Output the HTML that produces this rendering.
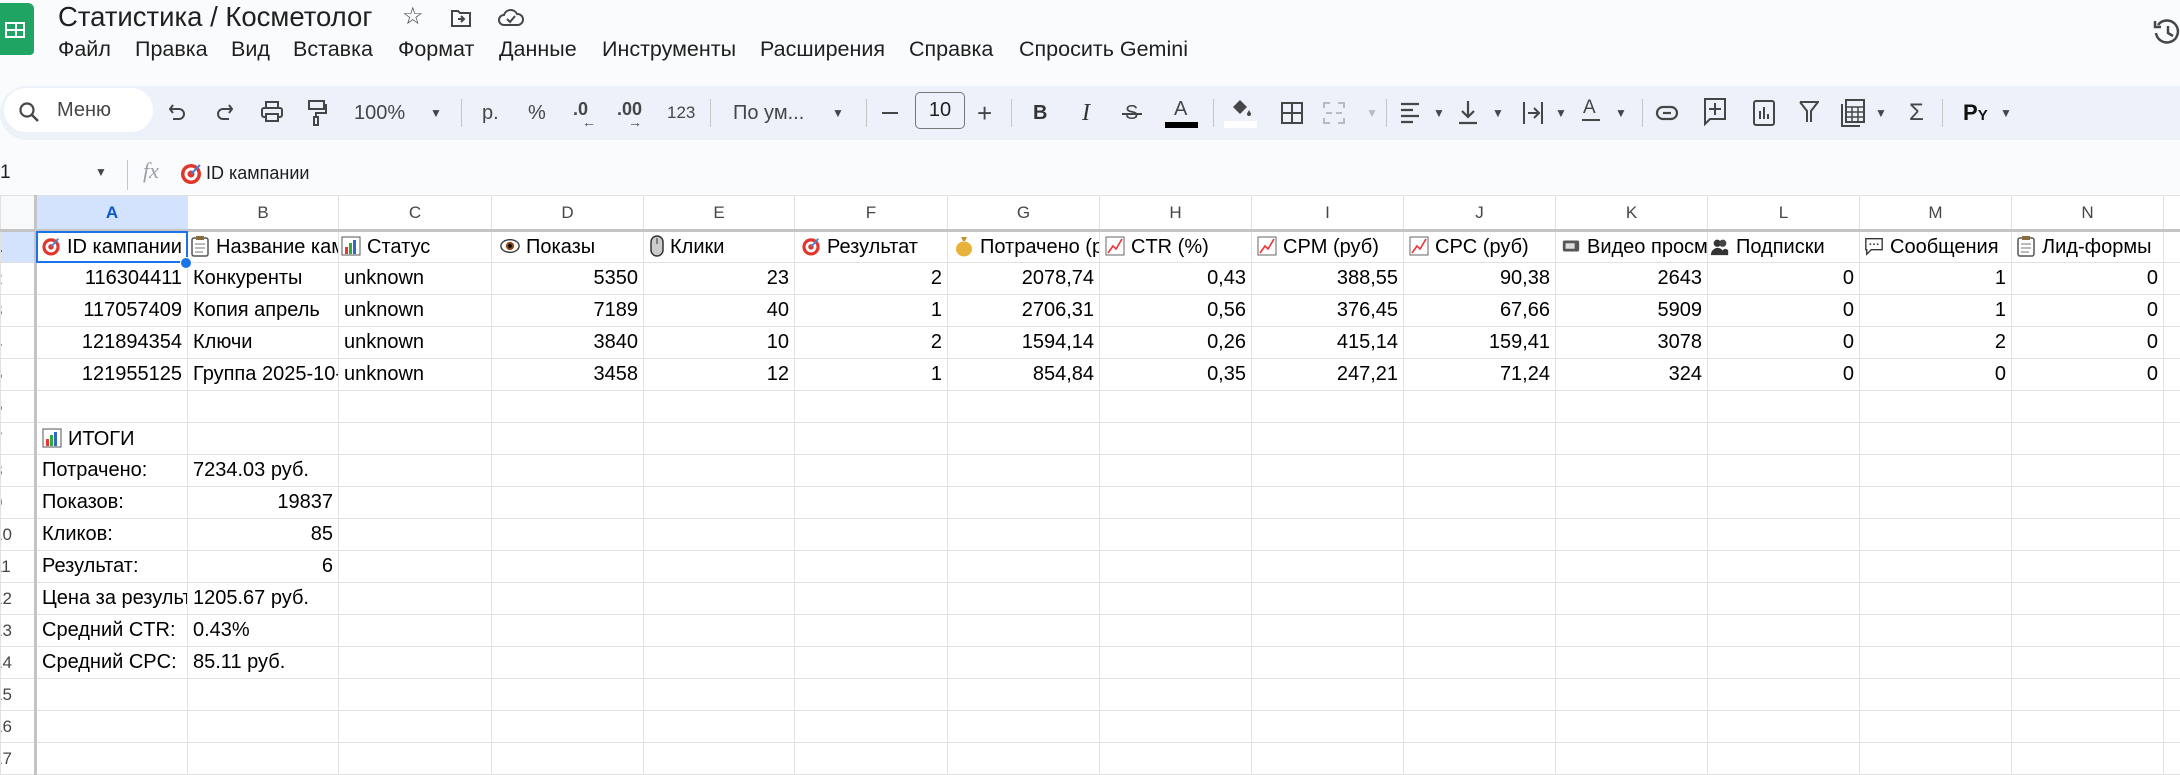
<!DOCTYPE html>
<html><head><meta charset="utf-8">
<style>
*{box-sizing:border-box;margin:0;padding:0}
body{width:2180px;height:753px;overflow:hidden;background:#f9fbfd;font-family:"Liberation Sans",Arial,sans-serif;color:#1f1f1f;position:relative}
.abs{position:absolute}
.menu span{position:absolute;top:37px;font-size:21.5px;color:#1f1f1f}
.tb{position:absolute;left:0;top:86px;width:2180px;height:54px;background:#edf2fa;border-radius:27px 0 0 27px}
.ti{position:absolute;top:0;height:54px;line-height:54px;font-size:20px;color:#444746}
.sep{position:absolute;top:13px;width:1px;height:28px;background:#c4c7c5}
.dd{position:absolute;top:0;line-height:54px;font-size:12px;color:#444746}
table{position:absolute;left:0;top:195px;width:2193px;border-collapse:collapse;table-layout:fixed;background:#fff}
td{border:1px solid #e1e1e1;height:32px;font-size:20px;white-space:nowrap;overflow:hidden;padding:0 5px;color:#000}
tr.h td{height:35px;text-align:center;font-size:17px;color:#444746;border-bottom:3px solid #c4c4c4}
td.rh{color:#444746;font-size:17px;padding:0;text-indent:-8px;text-align:left;border-right:3px solid #c4c4c4}
td.r{text-align:right}
.ic{display:inline-block;width:20px;height:22px;vertical-align:-4px;margin-right:6px}
</style></head><body>
<div class="abs" style="left:0;top:3px;width:34px;height:52px;background:#1fa463;border-radius:0 6px 4px 0"></div>
<div class="abs" style="left:5px;top:22px;width:20px;height:16px;border:2px solid #fff;background:linear-gradient(#fff,#fff) 8px 0/2px 100% no-repeat,linear-gradient(#fff,#fff) 0 5px/100% 2px no-repeat"></div>
<div class="abs" style="left:58px;top:1px;font-size:27.5px;color:#1f1f1f">Статистика / Косметолог</div>
<div class="abs" style="left:402px;top:2px;font-size:24px;color:#444746">☆</div>
<svg class="abs" style="left:450px;top:8px" width="22" height="20" viewBox="0 0 22 20"><path d="M2 3h6l2 2h10v13H2z" fill="none" stroke="#444746" stroke-width="2"/><path d="M8 11h6M11 8l3 3-3 3" fill="none" stroke="#444746" stroke-width="2"/></svg>
<svg class="abs" style="left:497px;top:6px" width="28" height="22" viewBox="0 0 28 22"><path d="M7 19a5 5 0 0 1 0-10a7 7 0 0 1 13-1a5.5 5.5 0 0 1 1 11z" fill="none" stroke="#444746" stroke-width="2"/><path d="M10 13l3 3 5-6" fill="none" stroke="#444746" stroke-width="2"/></svg>
<svg class="abs" style="left:2152px;top:17px" width="28" height="30" viewBox="0 0 28 30"><path d="M6 8a11 11 0 1 1-2 8" fill="none" stroke="#444746" stroke-width="2.5"/><path d="M3 4v6h6" fill="none" stroke="#444746" stroke-width="2.5"/><path d="M16 9v7l5 3" fill="none" stroke="#444746" stroke-width="2.5"/></svg>
<div class="menu">
<span style="left:58px">Файл</span><span style="left:135px">Правка</span><span style="left:231px">Вид</span><span style="left:293px">Вставка</span><span style="left:398px">Формат</span><span style="left:499px">Данные</span><span style="left:602px">Инструменты</span><span style="left:760px">Расширения</span><span style="left:909px">Справка</span><span style="left:1019px">Спросить Gemini</span>
</div>
<div class="tb">
<div class="abs" style="left:4px;top:2px;width:149px;height:44px;background:#fff;border-radius:22px"></div>
<svg class="abs" style="left:18px;top:15px" width="22" height="22" viewBox="0 0 22 22"><circle cx="9" cy="9" r="6.5" fill="none" stroke="#444746" stroke-width="2.2"/><path d="M14 14l6 6" stroke="#444746" stroke-width="2.4"/></svg>
<div class="ti" style="left:57px;top:-3px">Меню</div>
<svg class="abs" style="left:168px;top:16px" width="20" height="22" viewBox="0 0 20 22"><path d="M5 3L2 7l3 4M2 7h9a5 5 0 0 1 0 10H5" fill="none" stroke="#444746" stroke-width="2"/></svg>
<svg class="abs" style="left:214px;top:16px" width="20" height="22" viewBox="0 0 20 22"><path d="M15 3l3 4-3 4M18 7H9a5 5 0 0 0 0 10h6" fill="none" stroke="#444746" stroke-width="2"/></svg>
<svg class="abs" style="left:260px;top:15px" width="24" height="22" viewBox="0 0 24 22"><rect x="6" y="1" width="12" height="6" fill="none" stroke="#444746" stroke-width="2"/><rect x="2" y="7" width="20" height="9" rx="2" fill="none" stroke="#444746" stroke-width="2"/><rect x="6" y="13" width="12" height="7" fill="#edf2fa" stroke="#444746" stroke-width="2"/></svg>
<svg class="abs" style="left:307px;top:13px" width="20" height="28" viewBox="0 0 20 28"><rect x="2" y="2" width="15" height="8" fill="none" stroke="#444746" stroke-width="2"/><path d="M17 6h2v8H9v4" fill="none" stroke="#444746" stroke-width="2"/><rect x="7" y="18" width="4" height="8" fill="none" stroke="#444746" stroke-width="2"/></svg>
<div class="ti" style="left:354px">100%</div><div class="dd" style="left:430px">▼</div>
<div class="sep" style="left:461px"></div>
<div class="ti" style="left:482px">р.</div>
<div class="ti" style="left:528px">%</div>
<div class="ti" style="left:573px;font-size:18px;font-weight:bold;top:-4px">.0</div><div class="ti" style="left:582px;top:9px;font-size:14px">←</div>
<div class="ti" style="left:617px;font-size:18px;font-weight:bold;top:-4px">.00</div><div class="ti" style="left:628px;top:9px;font-size:14px">→</div>
<div class="ti" style="left:667px;font-size:17px">123</div>
<div class="sep" style="left:710px"></div>
<div class="ti" style="left:733px">По ум...</div><div class="dd" style="left:832px">▼</div>
<div class="sep" style="left:866px"></div>
<div class="abs" style="left:882px;top:26px;width:16px;height:2px;background:#444746"></div>
<div class="abs" style="left:915px;top:6px;width:50px;height:37px;border:1px solid #747775;border-radius:5px;text-align:center;line-height:35px;font-size:20px;color:#1f1f1f">10</div>
<div class="ti" style="left:977px;font-size:26px">+</div>
<div class="sep" style="left:1011px"></div>
<div class="ti" style="left:1033px;font-weight:bold;color:#333">B</div>
<div class="ti" style="left:1082px;font-style:italic;font-family:'Liberation Serif',serif;font-size:24px;color:#333">I</div>
<div class="ti" style="left:1125px;font-size:20px;color:#444">S</div><div class="abs" style="left:1122px;top:27px;width:20px;height:2px;background:#444"></div>
<div class="ti" style="left:1174px;top:-4px;font-size:20px">A</div><div class="abs" style="left:1165px;top:36px;width:33px;height:6px;background:#000"></div>
<div class="sep" style="left:1213px"></div>
<svg class="abs" style="left:1229px;top:10px" width="24" height="24" viewBox="0 0 24 24"><path d="M4 11l7-7 7 7-7 7z" fill="#444746"/><path d="M20 14c1 2 2 3 2 4a2 2 0 0 1-4 0c0-1 1-2 2-4z" fill="#444746"/></svg><div class="abs" style="left:1224px;top:35px;width:33px;height:7px;background:#fff"></div>
<svg class="abs" style="left:1281px;top:16px" width="22" height="22" viewBox="0 0 22 22"><rect x="1" y="1" width="20" height="20" fill="none" stroke="#444746" stroke-width="2"/><path d="M11 1v20M1 11h20" stroke="#444746" stroke-width="2"/></svg>
<svg class="abs" style="left:1323px;top:16px" width="22" height="22" viewBox="0 0 22 22"><path d="M1 6V1h6M15 1h6v5M21 16v5h-6M7 21H1v-5M3 11h6M13 11h6" fill="none" stroke="#b9bcbf" stroke-width="2"/></svg><div class="dd" style="left:1366px;color:#b9bcbf">▼</div>
<div class="sep" style="left:1386px"></div>
<svg class="abs" style="left:1400px;top:16px" width="20" height="22" viewBox="0 0 20 22"><path d="M1 2h18M1 8h12M1 14h18M1 20h12" stroke="#444746" stroke-width="2.2"/></svg><div class="dd" style="left:1433px">▼</div>
<svg class="abs" style="left:1458px;top:14px" width="20" height="26" viewBox="0 0 20 26"><path d="M10 1v16M4 11l6 6 6-6M1 23h18" fill="none" stroke="#444746" stroke-width="2.2"/></svg><div class="dd" style="left:1492px">▼</div>
<svg class="abs" style="left:1522px;top:14px" width="22" height="26" viewBox="0 0 22 26"><path d="M2 2v22M20 2v22M6 13h10M12 8l5 5-5 5" fill="none" stroke="#444746" stroke-width="2"/></svg><div class="dd" style="left:1555px">▼</div>
<div class="ti" style="left:1583px;top:-5px;font-size:19px">A</div><div class="abs" style="left:1582px;top:33px;width:18px;height:2px;background:#444746"></div><div class="dd" style="left:1615px">▼</div>
<div class="sep" style="left:1642px"></div>
<svg class="abs" style="left:1655px;top:18px" width="24" height="18" viewBox="0 0 24 18"><rect x="2" y="3" width="20" height="12" rx="6" fill="none" stroke="#444746" stroke-width="2.2"/><path d="M8 9h8" stroke="#444746" stroke-width="2.2"/></svg>
<svg class="abs" style="left:1703px;top:11px" width="24" height="30" viewBox="0 0 24 30"><path d="M2 2h20v20H7l-5 5z" fill="none" stroke="#444746" stroke-width="2"/><path d="M12 6v12M6 12h12" stroke="#444746" stroke-width="2"/></svg>
<svg class="abs" style="left:1753px;top:14px" width="22" height="26" viewBox="0 0 22 26"><rect x="1" y="1" width="20" height="24" rx="2" fill="none" stroke="#444746" stroke-width="2"/><path d="M7 19V11M11 19V7M15 19v-5" stroke="#444746" stroke-width="2"/></svg>
<svg class="abs" style="left:1799px;top:14px" width="20" height="24" viewBox="0 0 20 24"><path d="M1 2h18l-7 9v11M8 22V11L1 2" fill="none" stroke="#444746" stroke-width="2"/></svg>
<svg class="abs" style="left:1840px;top:12px" width="26" height="30" viewBox="0 0 26 30"><path d="M2 6v22h18" fill="none" stroke="#444746" stroke-width="2"/><rect x="6" y="2" width="18" height="22" fill="none" stroke="#444746" stroke-width="2"/><path d="M6 9h18M12 9v15M18 9v15M6 14h18M6 19h18" stroke="#444746" stroke-width="1.5"/></svg><div class="dd" style="left:1875px">▼</div>
<div class="ti" style="left:1909px;font-size:24px">Σ</div>
<div class="sep" style="left:1942px"></div>
<div class="ti" style="left:1963px;font-weight:bold;color:#111;font-size:22px">P<span style="font-size:15px">Y</span></div><div class="dd" style="left:2000px">▼</div>
</div>
<div class="abs" style="left:0;top:162px;font-size:19px;color:#1f1f1f">1</div>
<div class="abs" style="left:95px;top:165px;font-size:12px;color:#444746">▼</div>
<div class="abs" style="left:127px;top:160px;width:1px;height:30px;background:#c4c7c5"></div>
<div class="abs" style="left:143px;top:158px;font-size:22px;font-style:italic;font-family:'Liberation Serif',serif;color:#9aa0a6">fx</div>
<svg class="abs" style="left:180px;top:163px" width="22" height="22" viewBox="0 0 22 22"><circle cx="11" cy="11" r="10" fill="#e0362c"/><circle cx="11" cy="11" r="6.5" fill="#fff"/><circle cx="11" cy="11" r="3.5" fill="#e0362c"/><path d="M11 11l9-9" stroke="#4a7fd8" stroke-width="2"/></svg>
<div class="abs" style="left:206px;top:163px;font-size:18px;color:#1f1f1f">ID кампании</div>
<table>
<colgroup><col style="width:35px"><col style="width:152px"><col style="width:151px"><col style="width:153px"><col style="width:152px"><col style="width:151px"><col style="width:153px"><col style="width:152px"><col style="width:152px"><col style="width:152px"><col style="width:152px"><col style="width:152px"><col style="width:152px"><col style="width:152px"><col style="width:152px"><col style="width:31px"></colgroup>
<tr class="h"><td style="background:#f8f9fa;border-right:3px solid #c4c4c4"></td><td style="background:#d3e3fd;color:#0b57d0;font-weight:bold">A</td><td>B</td><td>C</td><td>D</td><td>E</td><td>F</td><td>G</td><td>H</td><td>I</td><td>J</td><td>K</td><td>L</td><td>M</td><td>N</td><td></td></tr>
<tr><td class="rh" style="background:#d3e3fd;color:#0b57d0;font-weight:bold">1</td>
<td style="outline:2px solid #1a73e8;outline-offset:-2px;padding-left:4px"><svg class="ic" viewBox="0 0 22 22"><circle cx="11" cy="12" r="9.5" fill="#e0362c"/><circle cx="11" cy="12" r="6" fill="#fff"/><circle cx="11" cy="12" r="3" fill="#e0362c"/><path d="M11 12l8-9" stroke="#4a7fd8" stroke-width="2"/></svg>ID кампании</td>
<td style="padding-left:2px"><svg class="ic" viewBox="0 0 20 22"><rect x="2" y="3" width="16" height="18" rx="2" fill="#fff" stroke="#555" stroke-width="1.5"/><rect x="6" y="1" width="8" height="4" fill="#8a6d3b"/><path d="M5 9h10M5 13h10M5 17h8" stroke="#777"/></svg>Название кампании</td>
<td style="padding-left:2px"><svg class="ic" viewBox="0 0 20 22"><rect x="1" y="2" width="18" height="18" fill="#fff" stroke="#555"/><rect x="4" y="12" width="3" height="7" fill="#e33"/><rect x="8" y="8" width="3" height="11" fill="#3a3"/><rect x="12" y="5" width="3" height="14" fill="#36c"/></svg>Статус</td>
<td style="padding-left:8px"><svg class="ic" viewBox="0 0 22 22"><ellipse cx="11" cy="11" rx="10" ry="7" fill="#fff" stroke="#333" stroke-width="1.5"/><circle cx="11" cy="11" r="4.5" fill="#8b4513"/><circle cx="11" cy="11" r="2" fill="#000"/></svg>Показы</td>
<td style="padding-left:6px"><svg class="ic" style="width:14px" viewBox="0 0 14 22"><rect x="1" y="1" width="12" height="20" rx="6" fill="#ccc" stroke="#333" stroke-width="1.5"/><path d="M7 3v6" stroke="#333"/></svg>Клики</td>
<td style="padding-left:6px"><svg class="ic" viewBox="0 0 22 22"><circle cx="11" cy="12" r="9.5" fill="#e0362c"/><circle cx="11" cy="12" r="6" fill="#fff"/><circle cx="11" cy="12" r="3" fill="#e0362c"/><path d="M11 12l8-9" stroke="#4a7fd8" stroke-width="2"/></svg>Результат</td>
<td style="padding-left:6px"><svg class="ic" viewBox="0 0 20 22"><path d="M7 2h6l-2 4h-2z" fill="#c8902a"/><ellipse cx="10" cy="14" rx="8" ry="7.5" fill="#e8b23a"/></svg>Потрачено (руб)</td>
<td style="padding-left:5px"><svg class="ic" viewBox="0 0 20 22"><rect x="1" y="2" width="18" height="18" fill="#fff" stroke="#666"/><path d="M3 18l5-7 3 3 6-10" fill="none" stroke="#e33" stroke-width="1.6"/></svg>CTR (%)</td>
<td style="padding-left:5px"><svg class="ic" viewBox="0 0 20 22"><rect x="1" y="2" width="18" height="18" fill="#fff" stroke="#666"/><path d="M3 18l5-7 3 3 6-10" fill="none" stroke="#e33" stroke-width="1.6"/></svg>CPM (руб)</td>
<td style="padding-left:5px"><svg class="ic" viewBox="0 0 20 22"><rect x="1" y="2" width="18" height="18" fill="#fff" stroke="#666"/><path d="M3 18l5-7 3 3 6-10" fill="none" stroke="#e33" stroke-width="1.6"/></svg>CPC (руб)</td>
<td style="padding-left:5px"><svg class="ic" viewBox="0 0 22 22"><rect x="2" y="5" width="18" height="12" rx="2" fill="#555"/><rect x="5" y="8" width="10" height="6" fill="#ddd"/></svg>Видео просмотры</td>
<td style="padding-left:2px"><svg class="ic" viewBox="0 0 22 22"><circle cx="8" cy="8" r="4" fill="#333"/><circle cx="14" cy="8" r="4" fill="#444"/><path d="M1 21c0-6 5-8 7-8s5 1 6 3c1-2 4-3 6 0v5z" fill="#333"/></svg>Подписки</td>
<td style="padding-left:4px"><svg class="ic" viewBox="0 0 22 22"><path d="M2 3h18v12H8l-5 5v-5H2z" fill="#fff" stroke="#333" stroke-width="1.5"/><circle cx="7" cy="9" r="1" fill="#333"/><circle cx="11" cy="9" r="1" fill="#333"/><circle cx="15" cy="9" r="1" fill="#333"/></svg>Сообщения</td>
<td style="padding-left:4px"><svg class="ic" viewBox="0 0 20 22"><rect x="2" y="3" width="16" height="18" rx="2" fill="#fff" stroke="#555" stroke-width="1.5"/><rect x="6" y="1" width="8" height="4" fill="#8a6d3b"/><path d="M5 9h10M5 13h10M5 17h8" stroke="#777"/></svg>Лид-формы</td><td></td></tr>
<tr><td class="rh">2</td><td class="r">116304411</td><td>Конкуренты</td><td>unknown</td><td class="r">5350</td><td class="r">23</td><td class="r">2</td><td class="r">2078,74</td><td class="r">0,43</td><td class="r">388,55</td><td class="r">90,38</td><td class="r">2643</td><td class="r">0</td><td class="r">1</td><td class="r">0</td><td></td></tr>
<tr><td class="rh">3</td><td class="r">117057409</td><td>Копия апрель</td><td>unknown</td><td class="r">7189</td><td class="r">40</td><td class="r">1</td><td class="r">2706,31</td><td class="r">0,56</td><td class="r">376,45</td><td class="r">67,66</td><td class="r">5909</td><td class="r">0</td><td class="r">1</td><td class="r">0</td><td></td></tr>
<tr><td class="rh">4</td><td class="r">121894354</td><td>Ключи</td><td>unknown</td><td class="r">3840</td><td class="r">10</td><td class="r">2</td><td class="r">1594,14</td><td class="r">0,26</td><td class="r">415,14</td><td class="r">159,41</td><td class="r">3078</td><td class="r">0</td><td class="r">2</td><td class="r">0</td><td></td></tr>
<tr><td class="rh">5</td><td class="r">121955125</td><td>Группа 2025-10-</td><td>unknown</td><td class="r">3458</td><td class="r">12</td><td class="r">1</td><td class="r">854,84</td><td class="r">0,35</td><td class="r">247,21</td><td class="r">71,24</td><td class="r">324</td><td class="r">0</td><td class="r">0</td><td class="r">0</td><td></td></tr>
<tr><td class="rh">6</td><td></td><td></td><td></td><td></td><td></td><td></td><td></td><td></td><td></td><td></td><td></td><td></td><td></td><td></td><td></td></tr>
<tr><td class="rh">7</td><td><svg class="ic" viewBox="0 0 20 22"><rect x="1" y="2" width="18" height="18" fill="#fff" stroke="#555"/><rect x="4" y="12" width="3" height="7" fill="#e33"/><rect x="8" y="8" width="3" height="11" fill="#3a3"/><rect x="12" y="5" width="3" height="14" fill="#36c"/></svg>ИТОГИ</td><td></td><td></td><td></td><td></td><td></td><td></td><td></td><td></td><td></td><td></td><td></td><td></td><td></td><td></td></tr>
<tr><td class="rh">8</td><td>Потрачено:</td><td>7234.03 руб.</td><td></td><td></td><td></td><td></td><td></td><td></td><td></td><td></td><td></td><td></td><td></td><td></td><td></td></tr>
<tr><td class="rh">9</td><td>Показов:</td><td class="r">19837</td><td></td><td></td><td></td><td></td><td></td><td></td><td></td><td></td><td></td><td></td><td></td><td></td><td></td></tr>
<tr><td class="rh">10</td><td>Кликов:</td><td class="r">85</td><td></td><td></td><td></td><td></td><td></td><td></td><td></td><td></td><td></td><td></td><td></td><td></td><td></td></tr>
<tr><td class="rh">11</td><td>Результат:</td><td class="r">6</td><td></td><td></td><td></td><td></td><td></td><td></td><td></td><td></td><td></td><td></td><td></td><td></td><td></td></tr>
<tr><td class="rh">12</td><td>Цена за результат:</td><td>1205.67 руб.</td><td></td><td></td><td></td><td></td><td></td><td></td><td></td><td></td><td></td><td></td><td></td><td></td><td></td></tr>
<tr><td class="rh">13</td><td>Средний CTR:</td><td>0.43%</td><td></td><td></td><td></td><td></td><td></td><td></td><td></td><td></td><td></td><td></td><td></td><td></td><td></td></tr>
<tr><td class="rh">14</td><td>Средний CPC:</td><td>85.11 руб.</td><td></td><td></td><td></td><td></td><td></td><td></td><td></td><td></td><td></td><td></td><td></td><td></td><td></td></tr>
<tr><td class="rh">15</td><td></td><td></td><td></td><td></td><td></td><td></td><td></td><td></td><td></td><td></td><td></td><td></td><td></td><td></td><td></td></tr>
<tr><td class="rh">16</td><td></td><td></td><td></td><td></td><td></td><td></td><td></td><td></td><td></td><td></td><td></td><td></td><td></td><td></td><td></td></tr>
<tr><td class="rh">17</td><td></td><td></td><td></td><td></td><td></td><td></td><td></td><td></td><td></td><td></td><td></td><td></td><td></td><td></td><td></td></tr>
</table>
<div class="abs" style="left:180px;top:257px;width:12px;height:12px;border-radius:50%;background:#1a73e8;border:1px solid #fff"></div>
</body></html>
